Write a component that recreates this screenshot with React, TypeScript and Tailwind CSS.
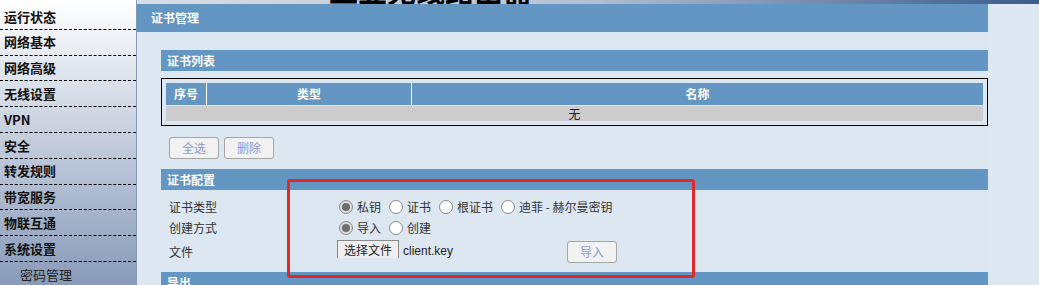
const menu = [
  "运行状态",
  "网络基本",
  "网络高级",
  "无线设置",
  "VPN",
  "安全",
  "转发规则",
  "带宽服务",
  "物联互通",
  "系统设置",
];

function Radio({ checked, label }: { checked?: boolean; label: string }) {
  return (
    <label className="flex items-center">
      <span
        className={
          checked
            ? "ml-[3px] mr-[4px] w-[14px] h-[14px] rounded-full border border-[#8a8a8a] bg-[#dcdcdc] flex items-center justify-center"
            : "ml-[3px] mr-[4px] w-[14px] h-[14px] rounded-full border border-[#8a8a8a] bg-white"
        }
      >
        {checked && <span className="w-[8px] h-[8px] rounded-full bg-[#6e6e6e]" />}
      </span>
      <span className="mr-[5px]">{label}</span>
    </label>
  );
}

function Bar({ title }: { title: string }) {
  return (
    <div className="h-[21px] bg-[#6396c2] text-white font-bold text-[12px] leading-[21px] pl-[6px]">
      {title}
    </div>
  );
}

function GrayButton({ children }: { children: React.ReactNode }) {
  return (
    <button className="w-[50px] h-[22px] shrink-0 rounded-[3px] border border-[#a5a5a5] bg-[#f2f2f2] text-[12px] text-[#8d9ad8]">
      {children}
    </button>
  );
}

export default function App() {
  const font = { fontFamily: '"Noto Sans CJK SC", "Liberation Sans", sans-serif' };
  return (
    <div className="relative flex w-[1039px] h-[285px] overflow-hidden bg-[#dee8f2]" style={font}>
      {/* Sidebar */}
      <aside className="w-[137px] shrink-0 border-r border-[#8797b3] bg-gradient-to-b from-[#ffffff] to-[#889bb9] pt-[4px]">
        {menu.map((m) => (
          <div
            key={m}
            className="h-[25.8px] border-b border-dashed border-black pl-[4px] flex items-center text-[13px] font-bold text-[#111]"
          >
            {m}
          </div>
        ))}
        <div className="h-[25px] pl-[20px] flex items-center text-[13px] text-[#222]">密码管理</div>
      </aside>

      {/* Right side */}
      <div className="flex-1 flex flex-col min-h-0">
        <div className="h-[4px] shrink-0 overflow-hidden bg-gradient-to-r from-[#d9dde4] via-[#b4c0d2] to-[#3b5b8b] pl-[192px]">
          <div className="-mt-[25px] text-[29px] leading-[30px] font-bold text-black whitespace-nowrap">
            工业无线路由器
          </div>
        </div>

        <div className="flex shrink-0">
          <main className="w-[851px] shrink-0 bg-[#dde7f2]">
            <div className="h-[28px] bg-[#6396c2] text-white font-bold text-[12px] flex items-center pl-[14px]">
              证书管理
            </div>

            <div className="pl-[24px] pt-[18px]">
              <Bar title="证书列表" />

              <div className="mt-[7px] border border-black p-[4px]">
                <div className="flex h-[22px] bg-[#6396c2] text-white font-bold text-[12px]">
                  <div className="w-[41px] flex items-center justify-center border-r border-white">序号</div>
                  <div className="w-[205px] flex items-center justify-center border-r border-white">类型</div>
                  <div className="flex-1 flex items-center justify-center">名称</div>
                </div>
                <div className="mt-[1px] h-[15px] bg-[#cccccc] text-[12px] text-[#222] flex items-center justify-center leading-none">
                  无
                </div>
              </div>

              <div className="flex gap-[5px] mt-[11px] pl-[8px]">
                <GrayButton>全选</GrayButton>
                <GrayButton>删除</GrayButton>
              </div>

              <div className="mt-[10px]">
                <Bar title="证书配置" />
              </div>

              <div className="pt-[6px] text-[12px] text-[#333]">
                <div className="flex h-[21px] items-center">
                  <div className="w-[175px] pl-[8px]">证书类型</div>
                  <Radio checked label="私钥" />
                  <Radio label="证书" />
                  <Radio label="根证书" />
                  <Radio label="迪菲 - 赫尔曼密钥" />
                </div>
                <div className="flex h-[21px] items-center">
                  <div className="w-[175px] pl-[8px]">创建方式</div>
                  <Radio checked label="导入" />
                  <Radio label="创建" />
                </div>
                <div className="flex h-[24px] items-center mt-[2px]">
                  <div className="w-[176px] pl-[8px]">文件</div>
                  <div className="w-[230px] flex items-start self-start h-[24px]">
                    <span className="h-[18px] px-[6px] border-t border-x border-[#8a8a8a] bg-[#efefef] text-[12px] leading-[18px] text-[#222]">
                      选择文件
                    </span>
                    <span className="ml-[4px] mt-[2px] text-[12px] text-[#222]" style={{ fontFamily: '"Liberation Sans", sans-serif' }}>
                      client.key
                    </span>
                  </div>
                  <GrayButton>导入</GrayButton>
                </div>
              </div>

              <div className="mt-[8px]">
                <Bar title="导出" />
              </div>
            </div>
          </main>
        </div>
      </div>

      {/* annotation */}
      <div className="absolute left-[287px] top-[179px] w-[408px] h-[99px] border-[3px] border-[#e02a27] rounded-[3px]" />
    </div>
  );
}
